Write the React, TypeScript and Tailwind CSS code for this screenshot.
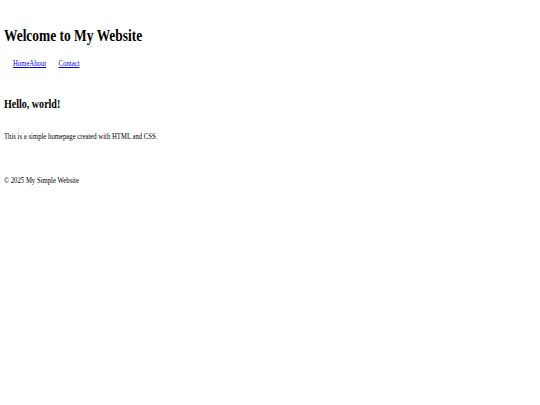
export default function App() {
  return (
    <div className="bg-white min-h-[405px] overflow-hidden">
      <div
        className="origin-top-left scale-x-[0.83] w-[650px] pl-[4.8px] pt-[27px] text-black"
        style={{ fontFamily: '"Liberation Serif", "Times New Roman", serif' }}
      >
        <header>
          <h1 className="text-[16.2px] leading-[18px] font-bold">Welcome to My Website</h1>
          <nav className="mt-[14px] pl-[10.8px]">
            <ul className="flex text-[8.1px] leading-[9px]">
              <li><a href="#" className="text-[#0000ee] underline">Home</a></li>
              <li className="mr-[15px]"><a href="#" className="text-[#0000ee] underline">About</a></li>
              <li><a href="#" className="text-[#0000ee] underline">Contact</a></li>
            </ul>
          </nav>
        </header>
        <main className="mt-[29px]">
          <h2 className="text-[12.1px] leading-[14px] font-bold">Hello, world!</h2>
          <p className="mt-[21px] text-[8.1px] leading-[9px]">This is a simple homepage created with HTML and CSS.</p>
        </main>
        <footer className="mt-[35px]">
          <p className="text-[8.1px] leading-[9px]">© 2025 My Simple Website</p>
        </footer>
      </div>
    </div>
  );
}
